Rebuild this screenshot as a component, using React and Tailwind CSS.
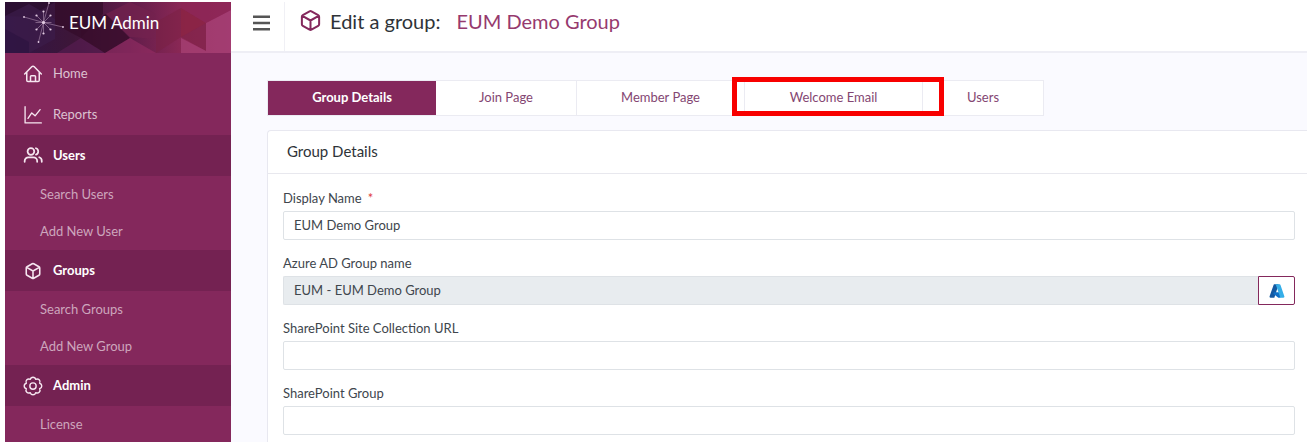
import React from 'react';

const stroke = {
  viewBox: '0 0 24 24',
  fill: 'none',
  stroke: 'currentColor',
  strokeLinecap: 'round',
  strokeLinejoin: 'round',
  'aria-hidden': true,
};

const HomeIcon = () => (
  <svg {...stroke} strokeWidth="1.8" className="size-5 shrink-0">
    <path d="M2 12 10.5 3.2a2.1 2.1 0 0 1 3 0L22 12M4.5 10v9.5c0 .8.6 1.5 1.5 1.5h12c.9 0 1.5-.7 1.5-1.5V10M9 21v-6c0-.6.4-1 1-1h4c.6 0 1 .4 1 1v6" />
  </svg>
);

const ChartIcon = () => (
  <svg {...stroke} strokeWidth="1.6" className="size-5 shrink-0">
    <path d="M2.5 2v19.500H22M6 16l4.500-6.500 4 3.500L20.500 5.500" />
  </svg>
);

const UsersIcon = () => (
  <svg {...stroke} strokeWidth="2.1" className="size-5 shrink-0">
    <circle cx="9.500" cy="6.500" r="4" />
    <path d="M2 19v-1a4.500 4.500 0 0 1 4.500-4.500h6A4.500 4.500 0 0 1 17 18v1M15.500 2.700a4 4 0 0 1 0 7.600M19.500 13.500A4.500 4.500 0 0 1 22.500 18v1" />
  </svg>
);

const CubeIcon = ({ className }) => (
  <svg {...stroke} strokeWidth="2.1" className={className}>
    <path d="M11 2.400a2 2 0 0 1 2 0l7 3.900a2 2 0 0 1 1 1.700v8a2 2 0 0 1-1 1.700l-7 3.900a2 2 0 0 1-2 0l-7-3.900A2 2 0 0 1 3 16V8a2 2 0 0 1 1-1.700zM3.500 7.200 12 12l8.500-4.800M12 12v9.500" />
  </svg>
);

const GearIcon = () => (
  <svg {...stroke} strokeWidth="1.7" className="size-5 shrink-0">
    <circle cx="12" cy="12" r="3.800" />
    <path d="M8.700 4.050a3.400 3.400 0 0 1 6.600 0 3.400 3.400 0 0 1 4.650 4.650 3.400 3.400 0 0 1 0 6.600 3.400 3.400 0 0 1-4.650 4.650 3.400 3.400 0 0 1-6.600 0 3.400 3.400 0 0 1-4.650-4.650 3.400 3.400 0 0 1 0-6.600A3.400 3.400 0 0 1 8.700 4.050z" />
  </svg>
);

const AzureIcon = () => (
  <svg viewBox="0 0 24 24" className="size-4" aria-hidden="true">
    <path d="M8.500 2h6L8 22H2.500C1 22 .5 21 1 19.500L6.500 4c.4-1.300 1-2 2-2z" fill="#1458a0" />
    <path d="M7 14h10v8H14L6.500 16z" fill="#0f6fc6" />
    <path d="M9 2h6.500c1 0 1.700.7 2 1.700L23 20c.5 1.300-.3 2-1.500 2H15c1.200 0 1.700-.8 1.300-2L10.500 3.500C10.200 2.500 9.700 2 9 2z" fill="#35aee8" />
  </svg>
);

const BannerArt = () => (
  <svg viewBox="0 0 226 51" preserveAspectRatio="none" className="absolute inset-0 size-full" aria-hidden="true">
    <defs>
      <linearGradient id="banner">
        <stop offset="0" stopColor="#301548" />
        <stop offset=".3" stopColor="#3d1638" />
        <stop offset=".55" stopColor="#601c4a" />
        <stop offset=".8" stopColor="#8e2956" />
        <stop offset="1" stopColor="#962d62" />
      </linearGradient>
    </defs>
    <path fill="url(#banner)" d="M0 0h226v51H0z" />
    <path fill="#2a0d2c" opacity=".75" d="M0 0h50L24 15 0 14z" />
    <path fill="#3c1c4a" opacity=".7" d="M0 14 24 2l26 15v20L24 51H0z" />
    <path fill="#2c1240" opacity=".6" d="M0 27 24 40v11H0z" />
    <path fill="#350d2a" opacity=".8" d="M50 0h48v12L76 36 50 22z" />
    <path fill="#561d50" opacity=".7" d="m76 36 24 15H52z" />
    <path fill="#370c2b" opacity=".8" d="m76 24 25-12 24 24-25 15-24-15z" />
    <path fill="#74224f" opacity=".7" d="m101 12 24-12 26 12v25l-26-2z" />
    <path fill="#9a3068" opacity=".55" d="m125 36 26 15h-51z" />
    <path fill="#7a1f42" opacity=".5" d="m151 20 25-14 25 15v28l-25-14-25 16z" />
    <path fill="#92233f" opacity=".5" d="m176 6 25 15-25 14z" />
    <path fill="#a84378" opacity=".7" d="m176 36 25 13V21l25-13v43h-50z" />
    <path fill="#8b2554" opacity=".7" d="M176 0h50v8l-25 13-25-15z" />
    <path
      stroke="#c9a9c8"
      strokeWidth=".6"
      opacity=".8"
      d="M38.500 20.500 19 15M38.500 20.500l19.500 4.500M38.500 20.500 44 1M38.500 20.500 33.500 40M38.500 20.500V9.500M38.500 20.500v11M38.500 20.500l-7-7M38.500 20.500l7-7M38.500 20.500l-7 7M38.500 20.500l7 7M38.500 20.500h-8M38.500 20.500h8"
    />
    <g fill="#e2cbe2">
      <circle cx="38.500" cy="20.500" r="1.600" />
      <circle cx="19" cy="15" r=".9" />
      <circle cx="58" cy="25" r=".9" />
      <circle cx="44" cy="1" r=".9" />
      <circle cx="33.500" cy="40" r=".9" />
      <circle cx="38.500" cy="9.500" r="1.100" />
      <circle cx="38.500" cy="31.500" r="1.100" />
      <circle cx="31.500" cy="13.500" r="1.100" />
      <circle cx="45.500" cy="13.500" r="1.100" />
      <circle cx="31.500" cy="27.500" r="1.100" />
      <circle cx="45.500" cy="27.500" r="1.100" />
    </g>
  </svg>
);

const nav = [
  { label: 'Home', icon: <HomeIcon /> },
  { label: 'Reports', icon: <ChartIcon /> },
  { label: 'Users', icon: <UsersIcon />, children: ['Search Users', 'Add New User'] },
  {
    label: 'Groups',
    icon: <CubeIcon className="size-5 shrink-0 p-px" />,
    children: ['Search Groups', 'Add New Group'],
  },
  { label: 'Admin', icon: <GearIcon />, children: ['License'] },
];

const tabs = ['Group Details', 'Join Page', 'Member Page', 'Welcome Email', 'Users'];

const inputBase =
  'h-[29px] w-full min-w-0 rounded-xs border border-[#dee2e6] px-2.5 pb-0.5 text-[13px] text-[#40464d] outline-none';

function Sidebar() {
  return (
    <aside className="w-[226px] shrink-0 bg-[#84285c]">
      <div className="relative flex h-[51px] items-center overflow-hidden">
        <BannerArt />
        <span className="relative pb-2.5 pl-16 text-[17px] leading-6 text-white">EUM Admin</span>
      </div>
      <nav>
        <ul>
          {nav.map(({ label, icon, children }) => (
            <li key={label}>
              <a
                href="#"
                className={
                  children
                    ? 'flex h-[41px] items-center gap-2.5 bg-[#742252] pl-[18px] font-bold text-white'
                    : 'flex h-[41px] items-center gap-2.5 pl-[18px] text-[#dcc2d1]'
                }
              >
                <span className="text-[#f6e6f0]">{icon}</span>
                {label}
              </a>
              {children && (
                <ul>
                  {children.map((child) => (
                    <li key={child}>
                      <a href="#" className="flex h-[37px] items-center pl-[35px] text-[#cda6bd]">
                        {child}
                      </a>
                    </li>
                  ))}
                </ul>
              )}
            </li>
          ))}
        </ul>
      </nav>
    </aside>
  );
}

function TextField({ id, label, required }) {
  return (
    <div>
      <label htmlFor={id} className="block pb-[3px] leading-5">
        {label}
        {required && <span className="pl-1.5 text-[#e03c3c]">*</span>}
      </label>
      <input id={id} type="text" defaultValue={required ? 'EUM Demo Group' : ''} className={inputBase} />
    </div>
  );
}

export default function App() {
  return (
    <div className="flex h-screen overflow-hidden bg-white pt-0.5 pl-[5px] font-['Lato','Open_Sans',sans-serif] text-[13px] text-[#40464d]">
      <Sidebar />
      <main className="min-w-0 flex-1 bg-[#fafaff]">
        <header className="flex h-[51px] items-stretch border-b-2 border-[#eeeef5] bg-white">
          <button type="button" aria-label="Toggle menu" className="flex w-[54px] items-center border-r border-[#f0f0f5] pb-2 pl-[22px] text-[#555]">
            <svg viewBox="0 0 17 16" className="h-4 w-[17px]" aria-hidden="true">
              <path d="M0 .5h17v2.500H0zM0 6.800h17v2.500H0zM0 13h17v2.500H0z" fill="currentColor" />
            </svg>
          </button>
          <h1 className="flex items-center pb-3 pl-3.5 text-[20px] leading-7 text-[#2e3338]">
            <CubeIcon className="size-[23px] text-[#84285c]" />
            <span className="pl-2">Edit a group:</span>
            <span className="pl-4 text-[#963a6e]">EUM Demo Group</span>
          </h1>
        </header>

        <div className="pt-[27px] pl-9">
          <div role="tablist" className="grid w-[777px] grid-cols-[168px_141px_168px_178px_1fr] border border-[#ebebf2] bg-white">
            {tabs.map((tab, i) => (
              <div key={tab} className="relative">
                <button
                  type="button"
                  role="tab"
                  aria-selected={i === 0}
                  className={
                    i === 0
                      ? 'h-[34px] w-full bg-[#84285c] font-bold text-white'
                      : i === 4
                        ? 'h-[34px] w-full text-[#844672]'
                        : 'h-[34px] w-full border-r border-[#ebebf2] text-[#844672]'
                  }
                >
                  {tab}
                </button>
                {i === 3 && (
                  <span className="pointer-events-none absolute -top-1 -right-[21px] -bottom-px -left-[13px] z-10 border-5 border-[#f80000]" />
                )}
              </div>
            ))}
          </div>

          <section className="mt-3.5 rounded-tl-sm border-t border-l border-[#e8e8f0] bg-white">
            <h2 className="border-b border-[#e8e8ee] pt-2.5 pb-3 pl-[19px] text-[15px] leading-5 text-[#2e3338]">
              Group Details
            </h2>
            <form className="flex flex-col gap-[13px] pt-3.5 pr-3 pb-6 pl-[15px]">
              <TextField id="display-name" label="Display Name" required />
              <div>
                <label htmlFor="azure-group" className="block pb-[3px] leading-5">
                  Azure AD Group name
                </label>
                <div className="flex">
                  <input
                    id="azure-group"
                    type="text"
                    readOnly
                    defaultValue="EUM - EUM Demo Group"
                    className="h-[29px] w-full min-w-0 rounded-l-xs border border-r-0 border-[#dee2e6] bg-[#e8ecef] px-2.5 pb-0.5 text-[13px] text-[#40464d] outline-none"
                  />
                  <button
                    type="button"
                    aria-label="Open in Azure"
                    className="flex w-[37px] shrink-0 items-center justify-center rounded-r-xs border border-[#84285c] bg-white"
                  >
                    <AzureIcon />
                  </button>
                </div>
              </div>
              <TextField id="site-url" label="SharePoint Site Collection URL" />
              <TextField id="sp-group" label="SharePoint Group" />
            </form>
          </section>
        </div>
      </main>
    </div>
  );
}
